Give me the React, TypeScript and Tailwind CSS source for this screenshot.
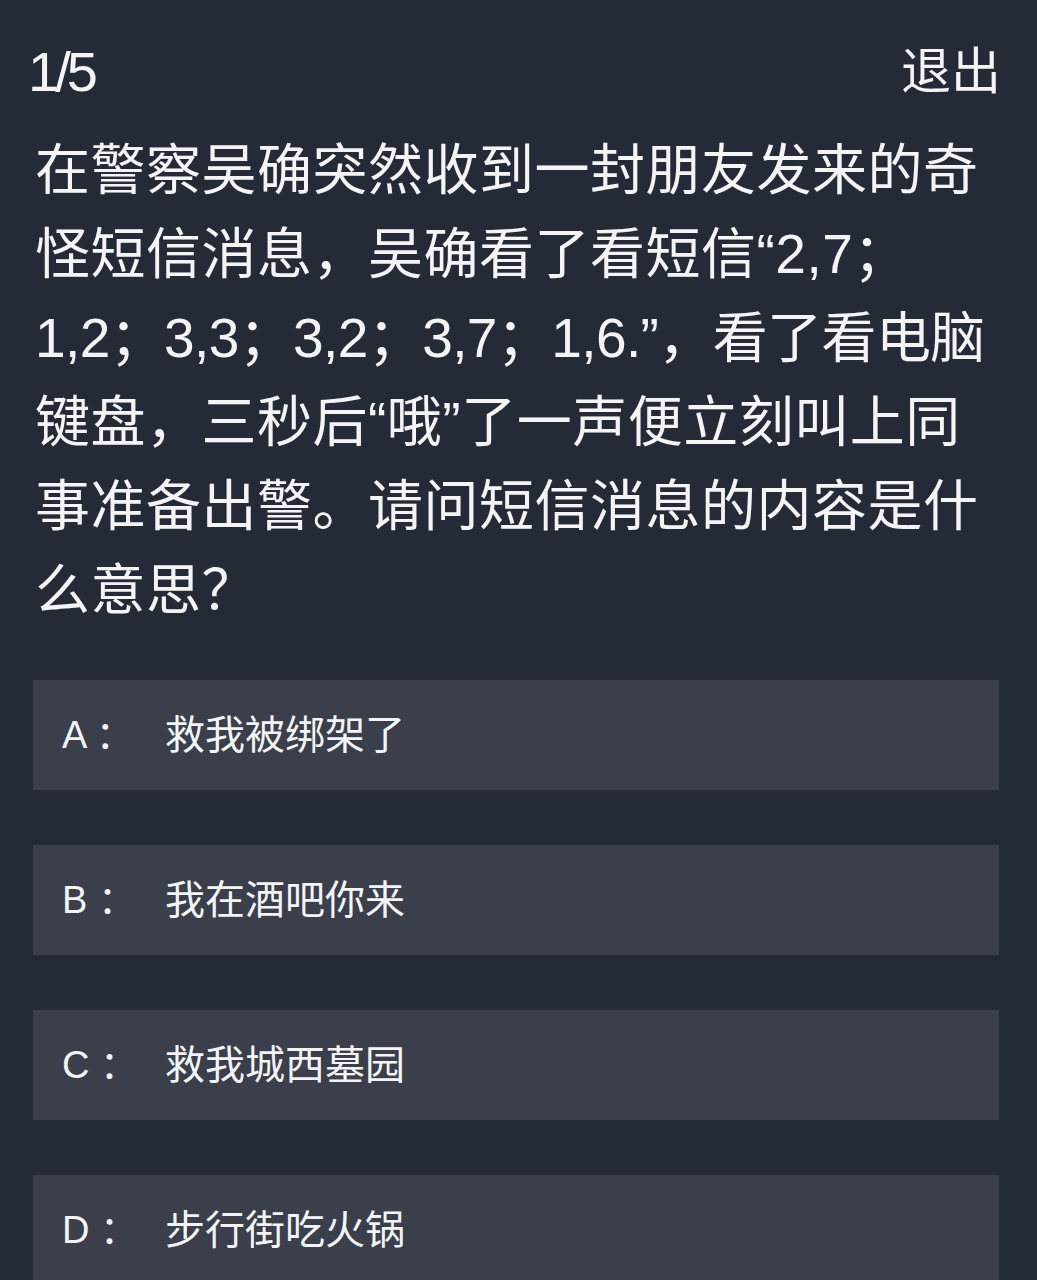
const font = { fontFamily: '"Liberation Sans", "Noto Sans CJK SC", sans-serif' };

const options = [
  { key: "A", text: "救我被绑架了" },
  { key: "B", text: "我在酒吧你来" },
  { key: "C", text: "救我城西墓园" },
  { key: "D", text: "步行街吃火锅" },
];

// line 3 is mostly latin digits, which run wider than the screenshot's font
const lines = [
  { t: "在警察吴确突然收到一封朋友发来的奇", tight: false },
  { t: "怪短信消息，吴确看了看短信“2,7；", tight: false },
  { t: "1,2；3,3；3,2；3,7；1,6.”，看了看电脑", tight: true },
  { t: "键盘，三秒后“哦”了一声便立刻叫上同", tight: false },
  { t: "事准备出警。请问短信消息的内容是什", tight: false },
  { t: "么意思？", tight: false },
];

export default function App() {
  return (
    <div className="min-h-[1280px] w-full overflow-hidden bg-[#252a37] text-[#f4f4f6]" style={font}>
      <div className="mt-[40px] flex h-[64px] items-center justify-between pl-[28px] pr-[36px]">
        <span className="text-[56px] leading-none tracking-[-4px]">1/5</span>
        <span className="text-[50px] leading-none">退出</span>
      </div>
      <div className="mt-[24px] px-[35px] text-[55px] leading-[84px] whitespace-nowrap">
        {lines.map((l, i) => (
          <div key={i} className={l.tight ? "tracking-[-0.6px]" : "tracking-[0.5px]"}>
            {l.t}
          </div>
        ))}
      </div>
      <div className="mt-[48px] flex flex-col gap-[55px] pl-[33px] pr-[38px]">
        {options.map((o) => (
          <div key={o.key} className="flex h-[110px] items-center bg-[#3a3f4b] pl-[29px]">
            <span className="w-[103px] text-[38px]">{o.key} ：</span>
            <span className="text-[40px]">{o.text}</span>
          </div>
        ))}
      </div>
    </div>
  );
}
